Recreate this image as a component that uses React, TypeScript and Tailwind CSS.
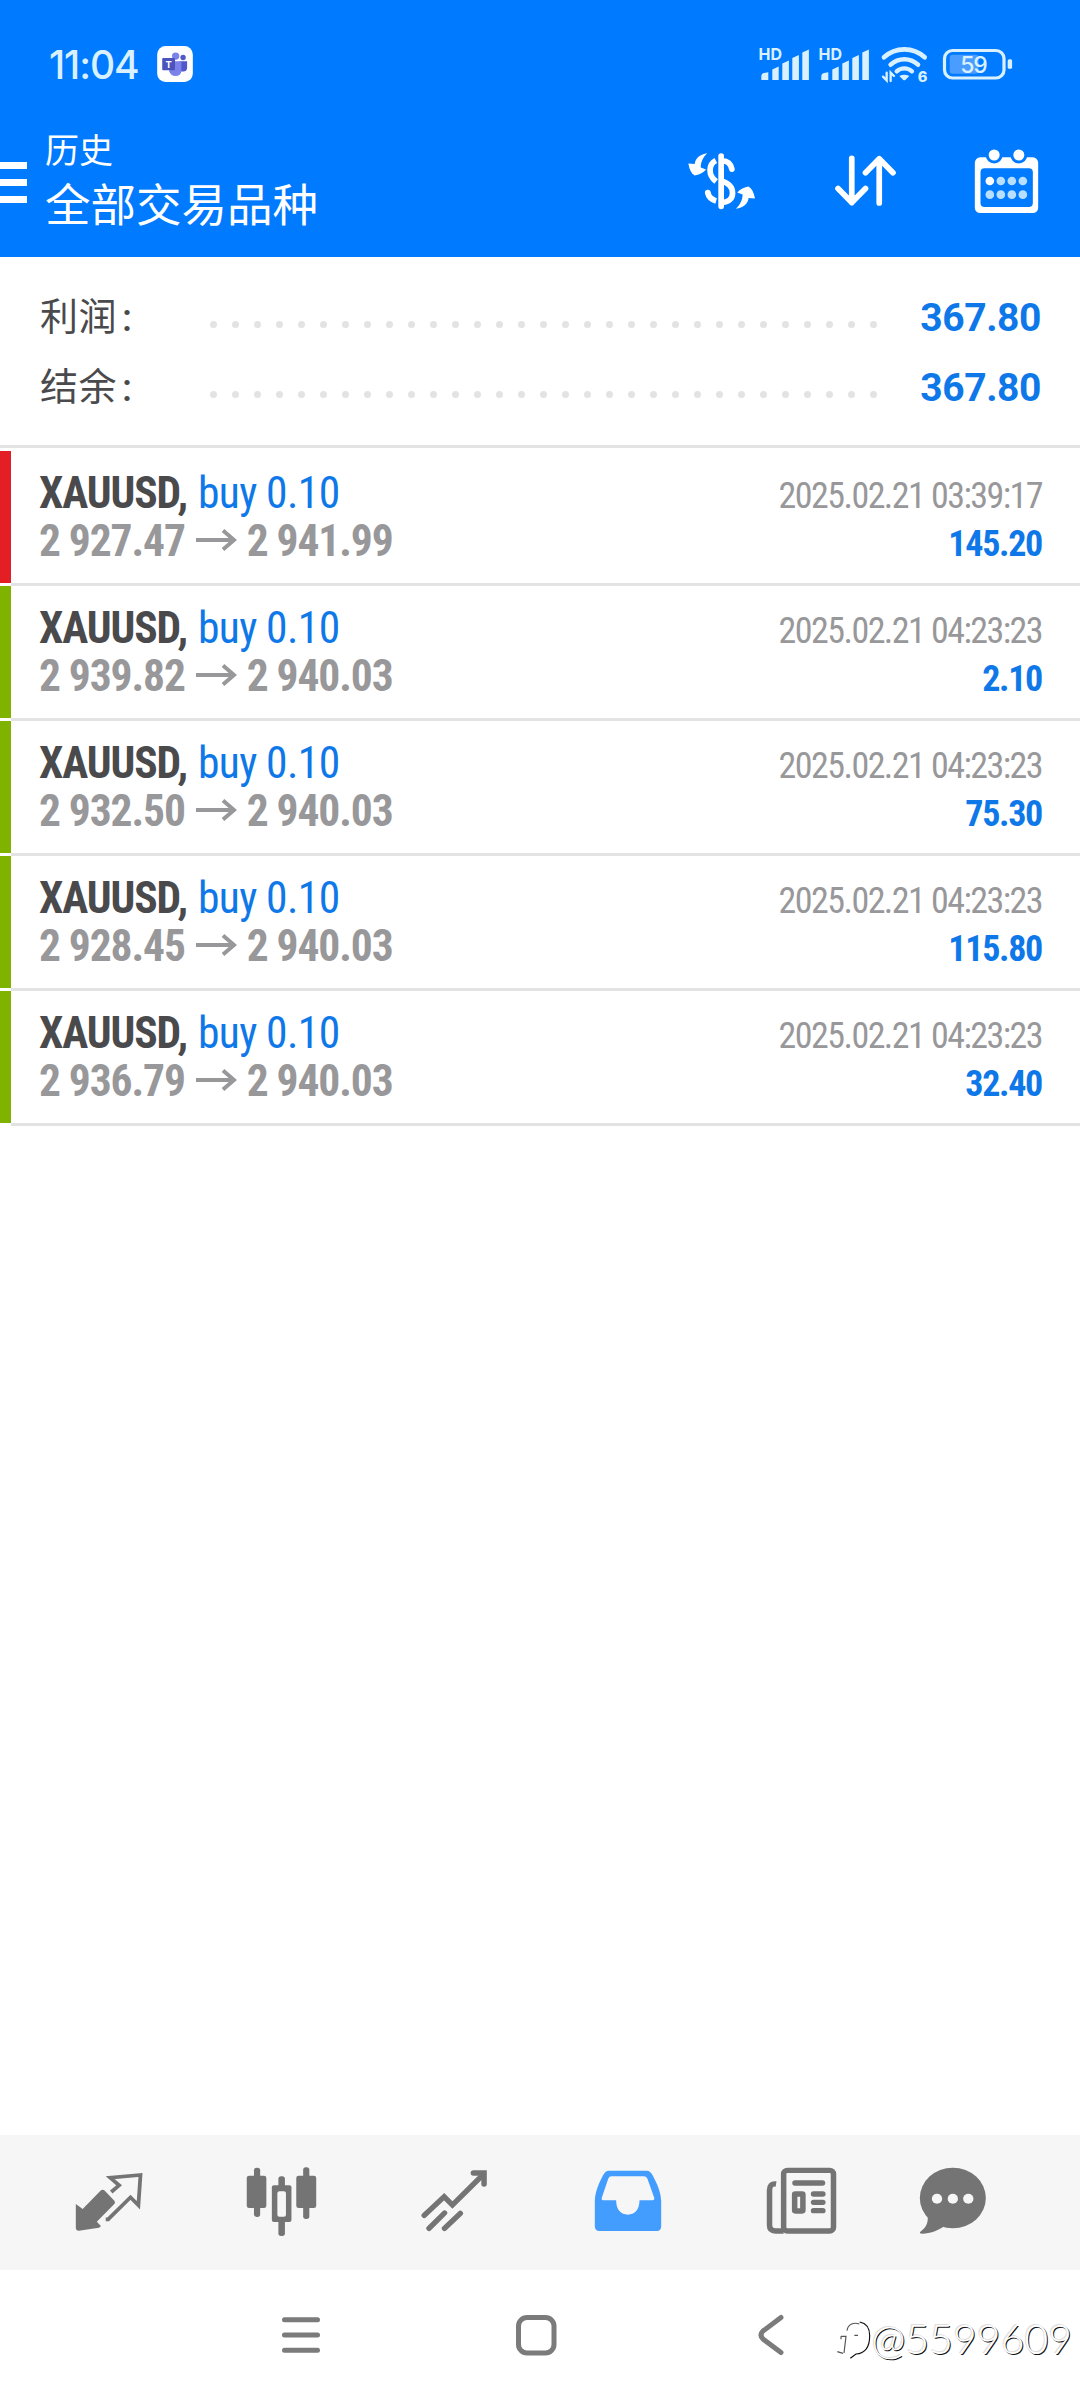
import React from 'react';

const totals = [
  { label: '利润', value: '367.80' },
  { label: '结余', value: '367.80' },
];

const deals = [
  { id: 1, color: 'bg-[#e31e24]', open: '2 927.47', close: '2 941.99', time: '2025.02.21 03:39:17', profit: '145.20' },
  { id: 2, color: 'bg-[#80b200]', open: '2 939.82', close: '2 940.03', time: '2025.02.21 04:23:23', profit: '2.10' },
  { id: 3, color: 'bg-[#80b200]', open: '2 932.50', close: '2 940.03', time: '2025.02.21 04:23:23', profit: '75.30' },
  { id: 4, color: 'bg-[#80b200]', open: '2 928.45', close: '2 940.03', time: '2025.02.21 04:23:23', profit: '115.80' },
  { id: 5, color: 'bg-[#80b200]', open: '2 936.79', close: '2 940.03', time: '2025.02.21 04:23:23', profit: '32.40' },
];

const dots = Array.from({ length: 31 }, (_, i) => i);

/* Status bar */

const TeamsIcon = () => (
  <svg width="36" height="36" viewBox="52 33 106 107">
    <rect x="52" y="33" width="106" height="107" rx="25" fill="#fff" />
    <circle cx="129" cy="67" r="8" fill="#5059c9" />
    <path d="M118 78H141V98Q141 109 130 109H118Z" fill="#5059c9" />
    <circle cx="107" cy="63" r="11" fill="#7b83eb" />
    <path d="M88 78H124V104Q124 122 106 122Q92 122 88 108Z" fill="#7b83eb" />
    <rect x="67" y="69" width="38" height="36" rx="3" fill="#4b53bc" />
    <text x="86" y="97" textAnchor="middle" fontSize="28" fontWeight="700" fill="#fff" className="font-[Inter,sans-serif]">T</text>
  </svg>
);

const SignalIcon = () => (
  <svg width="56" height="46" viewBox="-2 -6 56 46" fill="#d9f1ff">
    <text x="0.5" y="13" fontSize="16.5" fontWeight="700" textLength="23.5" lengthAdjust="spacingAndGlyphs" className="font-[Inter,sans-serif]">HD</text>
    <path d="M3.3 33V29Q3.3 26.5 6 26L10.3 25.2V33Z" />
    <path d="M14.3 33V22.5L20.7 19.5V33Z" />
    <path d="M24.3 33V16.5L30.9 13.5V33Z" />
    <path d="M34.3 33V11L40.9 8V33Z" />
    <path d="M44.3 33V5.5L50.9 2.5V33Z" />
  </svg>
);

const WifiIcon = () => (
  <svg width="56" height="45" viewBox="8 8 168 135" fill="none" stroke="#d9f1ff" strokeLinecap="round">
    <path d="M29 54A90 90 0 0 1 151 54" strokeWidth="14" />
    <path d="M49 76A60 60 0 0 1 131 76" strokeWidth="14" />
    <path d="M67 96A34 34 0 0 1 113 96" strokeWidth="13" />
    <path d="M75 110Q90 102 105 110L93 122Q90 124 87 122Z" fill="#d9f1ff" stroke="none" />
    <path d="M37 100V123L26 112M49 125V100L59 110" strokeWidth="7" />
    <text x="130" y="128" fontSize="44" fontWeight="800" fill="#d9f1ff" stroke="none" className="font-[Inter,sans-serif]">6</text>
  </svg>
);

const BatteryIcon = () => (
  <svg width="71" height="33" viewBox="0 0 71 33">
    <rect x="2.5" y="2.5" width="59.5" height="27.5" rx="8" fill="none" stroke="#d9f1ff" strokeWidth="3.2" />
    <rect x="7.7" y="6.7" width="29" height="19" rx="3" fill="#4a9dff" />
    <rect x="65.7" y="11.3" width="4.4" height="9.5" rx="1.5" fill="#d9f1ff" />
    <text x="18.2" y="24.7" fontSize="23" fontWeight="500" textLength="27.5" fill="#d9f1ff" className="font-[Inter,sans-serif]">59</text>
  </svg>
);

/* Toolbar */

const CurrencyIcon = () => (
  <svg width="72" height="62" viewBox="20 30 215 185" fill="none" stroke="#fff">
    <path d="M125 48V198" strokeWidth="17" strokeLinecap="round" />
    <path d="M109 61C88 72 84 104 110 124" strokeWidth="17" />
    <path d="M128 62C145 62 154 72 157 87" strokeWidth="17" strokeLinecap="round" />
    <path d="M126 123C148 128 159 142 159 158C159 175 148 186 126 187" strokeWidth="17" />
    <path d="M85 157C87 169 96 178 110 182" strokeWidth="17" />
    <circle cx="85" cy="157" r="8.5" fill="#fff" stroke="none" />
    <path d="M84 40C62 42 48 55 46 72L27 70C30 88 36 100 46 106C58 104 72 98 80 88L64 82C64 66 72 50 84 40Z" fill="#fff" stroke="none" />
    <path d="M84 40C62 42 48 55 46 72L27 70C30 88 36 100 46 106C58 104 72 98 80 88L64 82C64 66 72 50 84 40Z" fill="#fff" stroke="none" transform="rotate(180 126.5 122.5)" />
  </svg>
);

const SortIcon = () => (
  <svg width="67" height="57" viewBox="515 397 200 170" fill="none" stroke="#fff" strokeWidth="17" strokeLinecap="round" strokeLinejoin="round">
    <path d="M574 416V548M533 506L574 548L615 506" />
    <path d="M656 549V417M615 459L656 417L697 459" />
  </svg>
);

const CalendarIcon = () => (
  <svg width="69" height="66" viewBox="937 380 206 198">
    <rect x="945" y="408" width="190" height="167" rx="16" fill="#fff" />
    <rect x="962" y="441" width="157" height="116" rx="12" fill="#007aff" />
    <circle cx="1003" cy="401" r="21" fill="#fff" stroke="#007aff" strokeWidth="9" />
    <circle cx="1077" cy="401" r="21" fill="#fff" stroke="#007aff" strokeWidth="9" />
    <circle cx="990" cy="479" r="13" fill="#fff" />
    <g fill="#b8dfff">
      <circle cx="1023" cy="479" r="13" />
      <circle cx="1056" cy="479" r="13" />
      <circle cx="1089" cy="479" r="13" />
      <circle cx="990" cy="520" r="13" />
      <circle cx="1023" cy="520" r="13" />
      <circle cx="1056" cy="520" r="13" />
      <circle cx="1089" cy="520" r="13" />
    </g>
  </svg>
);

/* Tab bar */

const QuotesIcon = () => (
  <svg width="76" height="76" viewBox="205 133 221 228" preserveAspectRatio="none">
    <path d="M219 253L239 268L290 214Q297 207 304 214L331 243Q335 248 331 253L280 306L292 319Q290 323 286 324L228 333Q219 333 219 324Z" fill="#747474" />
    <path d="M322 217L345 197L319 174L407 166L401 257L378 233L313 299H306" fill="none" stroke="#747474" strokeWidth="11" />
  </svg>
);

const ChartsIcon = () => (
  <svg width="76" height="76" viewBox="707 133 221 228" preserveAspectRatio="none" fill="#747474">
    <rect x="736" y="144" width="18" height="148" rx="8" />
    <rect x="715" y="168" width="57" height="97" rx="7" />
    <rect x="807" y="170" width="19" height="179" rx="8" />
    <rect x="788" y="197" width="57" height="110" rx="6" />
    <rect x="804" y="215" width="25" height="76" rx="6" fill="#f6f6f6" />
    <rect x="879" y="143" width="18" height="155" rx="8" />
    <rect x="859" y="168" width="58" height="97" rx="7" />
  </svg>
);

const TradeIcon = () => (
  <svg width="76" height="76" viewBox="1210 133 221 228" preserveAspectRatio="none" fill="none" stroke="#747474" strokeWidth="16" strokeLinecap="round">
    <path d="M1231 287L1289 231L1313 256L1403 164" />
    <path d="M1374 160H1405V193" />
    <path d="M1245 326L1290 280M1290 326L1336 281" />
  </svg>
);

const HistoryIcon = () => (
  <svg width="76" height="76" viewBox="144 133 221 228" preserveAspectRatio="none">
    <path
      fill="#429dff"
      fillRule="evenodd"
      d="M158 245C159 215 170 190 182 167Q188 153 199 153H309Q320 153 326 167C338 190 350 215 351 245V320Q351 334 338 334H172Q158 334 158 320ZM206 170H300Q308 170 311 177L331 235Q332 242 326 242H288C288 270 274 285 254 285C234 285 220 270 220 242H182Q177 242 178 235L197 177Q200 170 206 170Z"
    />
  </svg>
);

const NewsIcon = () => (
  <svg width="76" height="76" viewBox="646 133 221 228" preserveAspectRatio="none" fill="none" stroke="#747474" strokeWidth="16">
    <rect x="706" y="152" width="145" height="182" rx="11" />
    <path d="M684 193Q665 190 665 212V317Q665 334 682 334H706" />
    <path d="M739 190H819" strokeLinecap="round" />
    <rect x="738" y="223" width="24" height="51" rx="2" />
    <path d="M793 223H820M793 248H820M793 273H820" strokeLinecap="round" />
  </svg>
);

const ChatIcon = () => (
  <svg width="76" height="76" viewBox="1089 133 221 228" preserveAspectRatio="none" fill="#747474">
    <ellipse cx="1199" cy="235" rx="96" ry="91" />
    <path d="M1126 288C1128 314 1118 325 1104 337Q1101 342 1110 342C1135 341 1152 333 1172 321Z" />
    <circle cx="1153" cy="237" r="15" fill="#f6f6f6" />
    <circle cx="1199" cy="237" r="15" fill="#f6f6f6" />
    <circle cx="1244" cy="237" r="15" fill="#f6f6f6" />
  </svg>
);

const App = () => {
  return (
    <div className="relative flex h-[2400px] w-[1080px] flex-col overflow-hidden bg-white font-[Roboto,'Noto_Sans_CJK_SC',sans-serif]">
      {/* Header */}
      <header className="h-[257px] bg-[#007aff] text-white">
        <div className="flex h-[127px] items-center pl-[49px] pr-[67px]">
          <span className="w-[108px] pt-[2px] font-[Inter,sans-serif] text-[39px] font-medium leading-none tracking-[-1.1px] text-[#d9f1ff]">11:04</span>
          <TeamsIcon />
          <div className="ml-auto flex items-center pt-px">
            <SignalIcon />
            <div className="w-1" />
            <SignalIcon />
            <div className="w-[5px]" />
            <WifiIcon />
            <div className="w-[9px]" />
            <BatteryIcon />
          </div>
        </div>

        <div className="flex h-[107px] items-center pr-[39px]">
          <div className="flex w-[45px] flex-col gap-[10px] pt-1">
            <div className="h-[7px] w-[27px] bg-white" />
            <div className="h-[7px] w-[27px] bg-white" />
            <div className="h-[7px] w-[27px] bg-white" />
          </div>
          <div className="pt-[7px]">
            <p className="text-[34px] leading-[46px]">历史</p>
            <h1 className="text-[45.5px] leading-[66px]">全部交易品种</h1>
          </div>
          <div className="ml-auto flex items-center gap-[73.5px]">
            <CurrencyIcon />
            <SortIcon />
            <CalendarIcon />
          </div>
        </div>
      </header>

      {/* Totals */}
      <section className="h-[191px] border-b-[3px] border-[#e3e3e3] pl-10 pr-[39px] pt-[25px]">
        {totals.map((total) => (
          <div key={total.label} className="flex h-[70px] items-center">
            <div className="flex w-[170px] items-center text-[38px] tracking-[0.5px] text-[#4a4a4d]">
              {total.label}
              <span className="ml-[5px] mt-[3px] font-medium">:</span>
            </div>
            <div className="flex w-[667px] justify-between pt-[14px]">
              {dots.map((dot) => (
                <div key={dot} className="size-[7px] rounded-full bg-[#e3e3e3]" />
              ))}
            </div>
            <div className="ml-auto pt-0.5 text-[39px] font-bold leading-[70px] tracking-[-0.4px] text-[#0f78e9]">{total.value}</div>
          </div>
        ))}
      </section>

      {/* Deals */}
      <ul className="mt-[3px] flex-1 [font-stretch:75%]">
        {deals.map((deal) => (
          <li key={deal.id} className="flex h-[135px]">
            <div className={`h-[132px] w-[11px] ${deal.color}`} />
            <div className="flex flex-1 justify-between border-b-[3px] border-[#e3e3e3] pl-[28px] pr-[38px]">
              <div className="pt-[19px] text-[43.5px] leading-[48px] tracking-[-1.1px]">
                <div>
                  <span className="font-bold text-[#4a4a4d]">XAUUSD,</span>{' '}
                  <span className="ml-[2px] tracking-[-0.6px] text-[#0f78e9]">buy 0.10</span>
                </div>
                <div className="flex items-center font-bold text-[#98989b]">
                  {deal.open}
                  <svg className="mb-[5px] ml-[11px] mr-[10px]" width="41" height="22" viewBox="0 0 41 22" fill="none" stroke="#98989b" strokeWidth="4">
                    <path d="M0 11H38M27 1.5L38 11L27 20.5" />
                  </svg>
                  {deal.close}
                </div>
              </div>
              <div className="pt-[21px] text-right text-[36px] leading-[48px]">
                <div className="tracking-[-1.55px] text-[#98989b]">{deal.time}</div>
                <div className="font-bold tracking-[-1.3px] text-[#0f78e9]">{deal.profit}</div>
              </div>
            </div>
          </li>
        ))}
      </ul>

      {/* Tabs */}
      <nav className="flex h-[135px] items-center bg-[#f6f6f6] pb-0.5 pl-[22px]">
        <div className="flex w-[173px] justify-center"><QuotesIcon /></div>
        <div className="flex w-[173px] justify-center"><ChartsIcon /></div>
        <div className="flex w-[173px] justify-center"><TradeIcon /></div>
        <div className="flex w-[173px] justify-center"><HistoryIcon /></div>
        <div className="flex w-[173px] justify-center"><NewsIcon /></div>
        <div className="flex w-[132px] justify-center"><ChatIcon /></div>
      </nav>

      {/* System navigation */}
      <footer className="flex h-[130px] items-center pl-[281px]">
        <svg width="40" height="40" viewBox="0 0 40 40" stroke="#7b7b7b" strokeWidth="5" strokeLinecap="round">
          <path d="M3.5 4.7H36.5M3.5 20H36.5M3.5 35.3H36.5" />
        </svg>
        <svg className="ml-[194px]" width="42" height="42" viewBox="0 0 42 42" fill="none" stroke="#7b7b7b" strokeWidth="5">
          <rect x="3.5" y="3.5" width="35.5" height="35.5" rx="8.5" />
        </svg>
        <svg className="ml-[200px]" width="28" height="44" viewBox="0 0 28 44" fill="none" stroke="#7b7b7b" strokeWidth="5" strokeLinecap="round">
          <path d="M24 4.5L6 18Q2 22 6 26L24 39.5" />
        </svg>
      </footer>

      {/* Watermark */}
      <div className="absolute bottom-[39px] right-[8px] flex items-center text-white">
        <svg className="mt-1" width="36" height="42" viewBox="22 45 108 126" fill="none" strokeWidth="3.5">
          <path d="M93 54C115 58 123 72 123 95C123 130 108 148 82 150L65 163" stroke="#111" />
          <path d="M55 80C58 60 76 54 92 60M37 97H52L46 147M37 97V106M77 94H88M26 143L43 148" stroke="#555" />
        </svg>
        <span className="font-[Lato,sans-serif] text-[41px] font-light leading-none [text-shadow:1px_1px_0_#111,-1px_-1px_0_#ddd]">@5599609</span>
      </div>
    </div>
  );
};

export default App;
